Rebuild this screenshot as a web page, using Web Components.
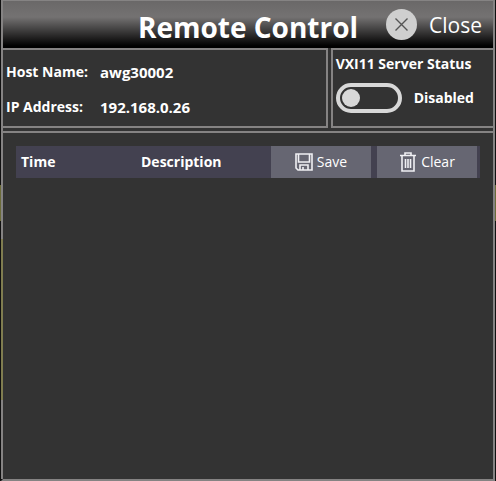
<!DOCTYPE html>
<html lang="en">
<head>
<meta charset="utf-8">
<title>Remote Control</title>
<style>
  body {
    margin: 0;
    background: #101010;
    color: #fff;
    font-family: "Open Sans", "Noto Sans", sans-serif;
  }
</style>
</head>
<body>
<x-remote-control>
  <x-title-bar slot="title">Remote Control</x-title-bar>
  <x-host-info slot="host" name="awg30002" address="192.168.0.26"></x-host-info>
  <x-server-status slot="status">VXI11 Server Status</x-server-status>
  <x-event-log></x-event-log>
</x-remote-control>

<script>
class BaseElement extends HTMLElement {
  constructor() {
    super();
    const template = document.createElement('template');
    template.innerHTML = this.constructor.markup;
    this.attachShadow({ mode: 'open' }).appendChild(template.content.cloneNode(true));
  }
}

class RemoteControlElement extends BaseElement {
  static markup = `
    <style>
      :host {
        display: flex;
        flex-direction: column;
        box-sizing: border-box;
        min-height: 100vh;
        padding: 0 1px;
        background: linear-gradient(#101010 185px, #6b6b38 185px, #6b6b38 221px, #101010 221px);
      }
      main {
        flex: 1;
        display: flex;
        flex-direction: column;
        border: 2px solid #858383;
        border-top-width: 0;
        border-left-color: transparent;
        background:
          linear-gradient(#333, #333) padding-box,
          linear-gradient(#858383 239px, #807d50 239px, #807d50 400px, #858383 400px) border-box;
      }
      .info {
        display: grid;
        grid-template-columns: 2fr 1fr;
        gap: 3px;
      }
      .panel {
        box-sizing: border-box;
        border: 2px solid #858383;
      }
      .host {
        border-left-width: 0;
      }
      .status {
        border-right-width: 0;
      }
      .log {
        flex: 1;
        margin-top: 3px;
        padding: 13px;
        border-top: 2px solid #858383;
      }
    </style>
    <main>
      <slot name="title"></slot>
      <div class="info">
        <div class="panel host"><slot name="host"></slot></div>
        <div class="panel status"><slot name="status"></slot></div>
      </div>
      <div class="log"><slot></slot></div>
    </main>
  `;
}

class TitleBarElement extends BaseElement {
  static markup = `
    <style>
      :host {
        display: grid;
        grid-template-columns: 1fr auto 1fr;
        box-sizing: border-box;
        height: 48px;
        border-top: 1px solid #858383;
        background: linear-gradient(#6a6868, #747272 16px, #000 45px);
      }
      h1 {
        grid-column: 2;
        align-self: end;
        margin: 0;
        font-size: 28px;
        line-height: 42px;
        white-space: nowrap;
      }
      button {
        align-self: center;
        justify-self: end;
        display: flex;
        align-items: center;
        gap: 12px;
        margin-right: 11px;
        padding: 0;
        border: 0;
        background: none;
        color: inherit;
        font: 21px/32px "Open Sans", "Noto Sans", sans-serif;
      }
    </style>
    <h1><slot></slot></h1>
    <button type="button">
      <svg width="31" height="31" viewBox="0 0 31 31" aria-hidden="true">
        <circle cx="15.5" cy="15.5" r="15.5" fill="#cfcfcf"/>
        <path d="M9.5 9.5l12 12M21.5 9.5l-12 12" stroke="#555" stroke-width="1.4"/>
      </svg>
      <span>Close</span>
    </button>
  `;
}

class HostInfoElement extends BaseElement {
  static markup = `
    <style>
      :host {
        display: block;
        padding: 12px 3px 9px;
      }
      dl {
        display: grid;
        grid-template-columns: 84px 1fr;
        gap: 15px 10px;
        margin: 0;
        font-size: 14px;
        font-weight: bold;
        line-height: 20px;
        white-space: nowrap;
      }
      dd {
        margin: 0;
        font-size: 15px;
      }
    </style>
    <dl>
      <dt>Host Name:</dt><dd id="name"></dd>
      <dt>IP Address:</dt><dd id="address"></dd>
    </dl>
  `;

  connectedCallback() {
    ['name', 'address'].forEach(id => {
      this.shadowRoot.getElementById(id).textContent = this.getAttribute(id);
    });
  }
}

class ServerStatusElement extends BaseElement {
  static markup = `
    <style>
      :host {
        display: block;
        padding: 4px 3px;
        font-size: 14px;
        font-weight: bold;
        line-height: 20px;
        white-space: nowrap;
      }
      label {
        display: flex;
        align-items: center;
        gap: 12px;
        margin-top: 9px;
      }
      input {
        appearance: none;
        display: flex;
        align-items: center;
        box-sizing: border-box;
        width: 66px;
        height: 30px;
        margin: 0;
        padding: 0 2px;
        border: 4px solid #d8d8d8;
        border-radius: 15px;
      }
      input::before {
        content: "";
        width: 18px;
        height: 18px;
        border-radius: 50%;
        background: #d8d8d8;
      }
      input:checked {
        justify-content: flex-end;
      }
    </style>
    <div><slot></slot></div>
    <label><input type="checkbox" role="switch"><span>Disabled</span></label>
  `;

  connectedCallback() {
    const input = this.shadowRoot.querySelector('input');
    const state = this.shadowRoot.querySelector('span');
    input.addEventListener('change', () => {
      state.textContent = input.checked ? 'Enabled' : 'Disabled';
    });
  }
}

class ActionButtonElement extends BaseElement {
  static markup = `
    <style>
      :host {
        display: block;
      }
      button {
        display: flex;
        align-items: center;
        justify-content: center;
        gap: 4px;
        width: 100px;
        height: 32px;
        padding: 0;
        border: 0;
        background: #666672;
        color: #fff;
        font: 14px/20px "Open Sans", "Noto Sans", sans-serif;
      }
    </style>
    <button type="button"><slot name="icon"></slot><slot></slot></button>
  `;
}

class EventLogElement extends BaseElement {
  static markup = `
    <style>
      :host {
        display: block;
      }
      table {
        width: 100%;
        border-collapse: collapse;
        table-layout: fixed;
        font-size: 14px;
        line-height: 20px;
      }
      tr {
        background: #434150;
      }
      th {
        padding: 0 5px;
        text-align: left;
      }
      .time {
        width: 110px;
      }
      .actions {
        width: 206px;
        padding: 0 3px 0 0;
      }
      .actions div {
        display: flex;
        gap: 6px;
      }
      svg {
        display: block;
        fill: none;
        stroke: #f0f0f4;
      }
    </style>
    <table>
      <thead>
        <tr>
          <th class="time">Time</th>
          <th>Description</th>
          <th class="actions">
            <div>
              <x-action-button>
                <svg slot="icon" width="18" height="18" viewBox="0 0 18 18" stroke-width="1.6" aria-hidden="true">
                  <path d="M1 1h16v16H3l-2-2zM3.500 1v8h11V1M5 17v-5h8v5M8 14v3"/>
                </svg>
                Save
              </x-action-button>
              <x-action-button>
                <svg slot="icon" width="18" height="20" viewBox="0 0 18 20" stroke-width="1.6" aria-hidden="true">
                  <path d="M1 3.500h16M6 3V1h6v2M3 4v15h12V4M6.500 7v9M9 7v9M11.500 7v9"/>
                </svg>
                Clear
              </x-action-button>
            </div>
          </th>
        </tr>
      </thead>
      <tbody></tbody>
    </table>
  `;
}

customElements.define('x-action-button', ActionButtonElement);
customElements.define('x-event-log', EventLogElement);
customElements.define('x-server-status', ServerStatusElement);
customElements.define('x-host-info', HostInfoElement);
customElements.define('x-title-bar', TitleBarElement);
customElements.define('x-remote-control', RemoteControlElement);
</script>
</body>
</html>
